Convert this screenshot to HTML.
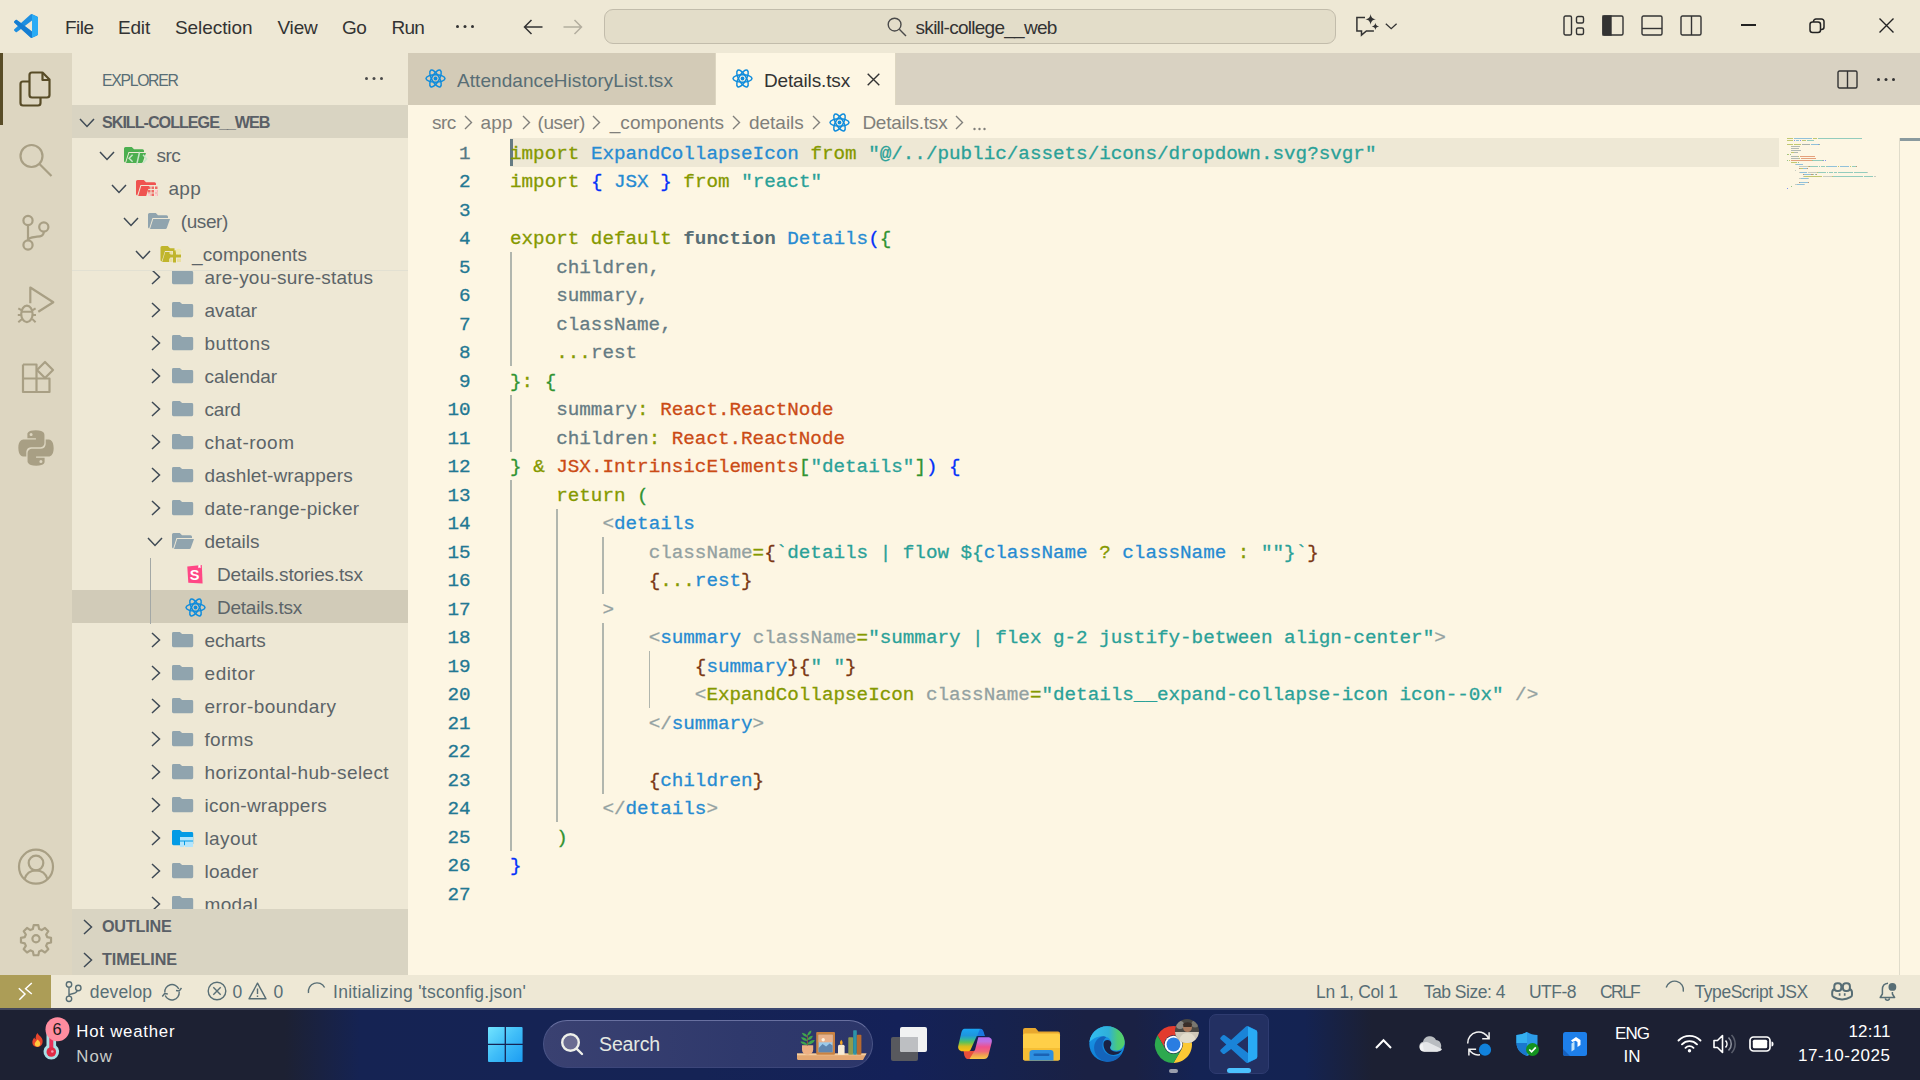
<!DOCTYPE html>
<html><head><meta charset="utf-8"><title>Details.tsx - skill-college__web - Visual Studio Code</title>
<style>
*{margin:0;padding:0;box-sizing:border-box}
html,body{width:1920px;height:1080px;overflow:hidden;background:#FDF6E3;font-family:"Liberation Sans",sans-serif;font-size:18.5px;color:#333}
.a{position:absolute}
.t{position:absolute;white-space:pre;line-height:1}
svg{position:absolute;overflow:visible}
#title{left:0;top:0;width:1920px;height:53px;background:#EEE8D5}
#act{left:0;top:53px;width:72px;height:922px;background:#DDD6C1}
#side{left:72px;top:53px;width:336px;height:922px;background:#EEE8D5;overflow:hidden}
#tabs{left:408px;top:53px;width:1512px;height:52px;background:#D9D2C2}
#bc{left:408px;top:105px;width:1512px;height:33px;background:#FDF6E3}
#ed{left:408px;top:138px;width:1512px;height:837px;background:#FDF6E3;overflow:hidden}
#status{left:0;top:975px;width:1920px;height:33px;background:#EEE8D5}
#task{left:0;top:1008px;width:1920px;height:72px;background:#1C202F}
</style></head><body>
<div id="title" class="a">
<!-- vscode logo -->
<svg style="left:14px;top:14px" width="24" height="24" viewBox="0 0 100 100"><path d="M70.9 99.3a6.2 6.2 0 0 0 5-.2l20.6-9.9A6.2 6.2 0 0 0 100 83.6V16.4a6.2 6.2 0 0 0-3.5-5.6L75.9.9a6.2 6.2 0 0 0-7.1 1.2L29.4 38 12.2 25a4.2 4.2 0 0 0-5.3.2L1.4 30.300a4.200 4.200 0 0 0 0 6.200L16.300 50 1.400 63.600a4.200 4.200 0 0 0 0 6.200l5.500 5a4.200 4.200 0 0 0 5.300.200l17.200-13 39.400 36a6.200 6.200 0 0 0 2.100 1.300zM75 27.300 45.100 50 75 72.700z" fill="#1E8FE0" fill-rule="evenodd"/><path d="M96.500 10.800 75.900.900a6.200 6.200 0 0 0-7.100 1.200L29.400 38 45.100 50 75 27.300V99.500l.900-.400 20.600-9.900A6.200 6.200 0 0 0 100 83.600V16.400a6.200 6.200 0 0 0-3.500-5.600z" fill="#23A9F2" opacity=".0"/><path d="M75 1.500V98.500c.3 0 .6-.2.900-.3l20.600-9.900A6.200 6.200 0 0 0 100 82.700V17.300a6.200 6.200 0 0 0-3.500-5.600L75.900 1.800c-.3-.1-.6-.2-.9-.3z" fill="#29ABF5"/><path d="M1.400 30.300l5.500-5a4.200 4.200 0 0 1 5.300-.2L75 72.700V99.300a6.200 6.200 0 0 1-6.200-1.400L1.400 36.500a4.200 4.200 0 0 1 0-6.200z" fill="#0C6FC6" opacity=".55"/></svg>
<span class="t" style="left:65px;top:18.200px;font-size:19px;letter-spacing:-0.529px">File</span>
<span class="t" style="left:118px;top:18.200px;font-size:19px;letter-spacing:-0.185px">Edit</span>
<span class="t" style="left:175px;top:18.200px;font-size:19px;letter-spacing:-0.074px">Selection</span>
<span class="t" style="left:277.5px;top:18.200px;font-size:19px;letter-spacing:-0.210px">View</span>
<span class="t" style="left:342px;top:18.200px;font-size:19px;letter-spacing:-0.423px">Go</span>
<span class="t" style="left:391.5px;top:18.200px;font-size:19px;letter-spacing:-0.785px">Run</span>
<svg style="left:455px;top:23.500px" width="22" height="5"><circle cx="2.500" cy="2.500" r="1.500" fill="#333"/><circle cx="10" cy="2.500" r="1.500" fill="#333"/><circle cx="17.500" cy="2.500" r="1.500" fill="#333"/></svg>
<!-- nav arrows -->
<svg style="left:523px;top:19px" width="20" height="16" viewBox="0 0 20 16" fill="none" stroke="#333" stroke-width="1.500"><path d="M19.500 8H1.500M8.500 1 1.500 8l7 7"/></svg>
<svg style="left:563px;top:19px" width="20" height="16" viewBox="0 0 20 16" fill="none" stroke="#B3AE9F" stroke-width="1.500"><path d="M.5 8h18M11.500 1l7 7-7 7"/></svg>
<!-- command center -->
<div class="a" style="left:604px;top:9px;width:732px;height:35px;background:#E3DDC9;border:1.500px solid #C2BCAB;border-radius:9px"></div>
<svg style="left:887px;top:17px" width="20" height="20" viewBox="0 0 20 20" fill="none" stroke="#4a4a4a" stroke-width="1.400"><circle cx="7.600" cy="7.600" r="6.400"/><path d="M12.300 12.300 19 19"/></svg>
<span class="t" style="left:915.600px;top:18.200px;font-size:19px;letter-spacing:-0.733px">skill-college__web</span>
<!-- chat icon -->
<svg style="left:1345px;top:5px" width="60" height="40" viewBox="0 0 60 40" fill="none" stroke="#333" stroke-width="1.500"><path d="M20 12.600h-8.100v13.300h4.600v4.200l4.900-4.200h7.500"/><path d="M25.600 8.900c.6 3.400 1.700 4.700 5.300 5.400-3.600.7-4.700 2-5.300 5.400-.6-3.400-1.700-4.700-5.300-5.400 3.600-.7 4.700-2 5.300-5.400z" fill="#333" stroke="none"/><path d="M30.400 17.800c.4 2.300 1.200 3.200 3.700 3.600-2.500.4-3.300 1.300-3.700 3.600-.4-2.300-1.200-3.200-3.700-3.600 2.500-.4 3.300-1.300 3.700-3.600z" fill="#333" stroke="none"/><path d="M40.800 18.700l5.400 5 5.400-5" stroke-width="1.300"/></svg>
<!-- layout icons -->
<svg style="left:1563px;top:15px" width="22" height="21" viewBox="0 0 22 21" fill="none" stroke="#333" stroke-width="1.400"><rect x="1" y="1" width="7.500" height="19" rx="1.500"/><rect x="13.500" y="1.500" width="7" height="6.500" rx="1.500"/><rect x="13.500" y="13" width="7" height="6.500" rx="1.500"/></svg>
<svg style="left:1602px;top:15px" width="22" height="21" viewBox="0 0 22 21" fill="none" stroke="#333" stroke-width="1.400"><rect x="1" y="1" width="20" height="19" rx="1.500"/><rect x="1" y="1" width="8" height="19" fill="#333"/></svg>
<svg style="left:1641px;top:15px" width="22" height="21" viewBox="0 0 22 21" fill="none" stroke="#333" stroke-width="1.400"><rect x="1" y="1" width="20" height="19" rx="1.500"/><path d="M1 13.500h20"/></svg>
<svg style="left:1680px;top:15px" width="22" height="21" viewBox="0 0 22 21" fill="none" stroke="#333" stroke-width="1.400"><rect x="1" y="1" width="20" height="19" rx="1.500"/><path d="M11.500 1v19"/></svg>
<!-- window controls -->
<div class="a" style="left:1741px;top:24px;width:15px;height:2px;background:#222"></div>
<svg style="left:1809px;top:18px" width="16" height="16" viewBox="0 0 16 16" fill="none" stroke="#222" stroke-width="1.500"><rect x="1" y="4" width="10.500" height="10.500" rx="2.500"/><path d="M4.500 4V3.500a2.500 2.500 0 0 1 2.500-2.500h5.500a2.500 2.500 0 0 1 2.500 2.500v5.500a2.500 2.500 0 0 1-2.500 2.500h-.5"/></svg>
<svg style="left:1879px;top:18px" width="15" height="15" viewBox="0 0 15 15" fill="none" stroke="#222" stroke-width="1.400"><path d="M.5.5l14 14M14.500.5l-14 14"/></svg>
</div>
<div id="act" class="a">
<div class="a" style="left:0;top:0;width:3px;height:72px;background:#584C27"></div>
<!-- explorer: abs x19-51, y71-107 => rel y 18-54 -->
<svg style="left:19px;top:18px" width="32" height="36" viewBox="0 0 32 36" fill="none" stroke="#584C27" stroke-width="2.200" stroke-linejoin="round"><path d="M10.500 10.500H4a2.500 2.500 0 0 0-2.500 2.500v19a2.500 2.500 0 0 0 2.500 2.500h15a2.500 2.500 0 0 0 2.500-2.500v-5.500"/><path d="M13 1.500h10.500l7 7v15.500a2.500 2.500 0 0 1-2.500 2.500h-15a2.500 2.500 0 0 1-2.500-2.500v-20a2.500 2.500 0 0 1 2.500-2.500z"/><path d="M23.500 2v7h7"/></svg>
<!-- search: circle center (31.500,156)=> rel y 103 -->
<svg style="left:0;top:72px" width="72" height="72" viewBox="0 0 72 72" fill="none" stroke="#A89F84" stroke-width="2.200"><circle cx="31.500" cy="31" r="11"/><path d="M39.500 39 51.500 51"/></svg>
<!-- scm: rel origin y=144 (abs 197) -->
<svg style="left:0;top:144px" width="72" height="72" viewBox="0 0 72 72" fill="none" stroke="#A89F84" stroke-width="2.200"><circle cx="28" cy="23.500" r="4.600"/><circle cx="28" cy="48" r="4.600"/><circle cx="43.800" cy="30" r="4.600"/><path d="M28 28.100v15.300M43.800 34.600c0 5-4 4.800-8 5.200s-7.800 1.500-7.800 3.600"/></svg>
<!-- debug: abs y 269 => rel 216 -->
<svg style="left:0;top:216px" width="72" height="72" viewBox="0 0 72 72" fill="none" stroke="#A89F84" stroke-width="2.200" stroke-linejoin="round"><path d="M30.300 34.300V18.500L53.300 33.200 38.300 42.700"/><ellipse cx="26.900" cy="44.900" rx="5.700" ry="8.200"/><path d="M21 42.700h12M18.300 39.300l3.900 2.300M35.600 39.300l-3.700 2.300M17.800 45.900h3.400M32.600 45.900h3.400M18.300 53.200l3.700-3.300M35.600 53.200l-3.400-3.300" stroke-width="2"/></svg>
<!-- extensions: abs y341 => rel 288 -->
<svg style="left:0;top:288px" width="72" height="72" viewBox="0 0 72 72" fill="none" stroke="#A89F84" stroke-width="2.200" stroke-linejoin="round"><path d="M23 23.500h13.500v27.500M23 23.500v27.500h26.500v-13.500h-26.500"/><path d="M45 21l8 8-8 8-8-8z"/></svg>
<!-- python: abs x18-54,y430-466 => rel y 377 -->
<svg style="left:18px;top:377px" width="36" height="36" viewBox="0 0 110 110"><path fill="#A89F84" d="M54.300 1C27 1 28.700 12.800 28.700 12.800l0 12.300h26.100v3.700H18.400S1 26.800 1 54.400s15.300 26.700 15.300 26.700h9.100V68.200s-.5-15.300 15-15.300h25.900s14.500.2 14.500-14V15.400S83 1 54.300 1zM40 9.200a4.700 4.700 0 1 1 0 9.400 4.700 4.700 0 0 1 0-9.400z"/><path fill="#A89F84" d="M55.700 109c27.300 0 25.600-11.800 25.600-11.800l0-12.300H55.200v-3.700h36.400S109 83.200 109 55.600 93.700 28.900 93.700 28.900h-9.100v12.900s.5 15.300-15 15.300H43.700s-14.500-.2-14.500 14v23.500S27 109 55.700 109zM70 100.800a4.700 4.700 0 1 1 0-9.400 4.700 4.700 0 0 1 0 9.400z"/></svg>
<!-- account: center abs (36,866.700) => rel y 813.700 -->
<svg style="left:0;top:778px" width="72" height="72" viewBox="0 0 72 72" fill="none" stroke="#A89F84" stroke-width="2.200"><circle cx="36" cy="35.700" r="17"/><circle cx="36" cy="32" r="7.300"/><path d="M24.500 48.300c1.500-5.500 6-9 11.500-9s10 3.500 11.500 9"/></svg>
<!-- gear: center abs (36,938.700) => rel y 885.700 -->
<svg style="left:0;top:850px" width="72" height="72" viewBox="-36 -35.700 72 72" fill="none" stroke="#A89F84" stroke-width="2.200" stroke-linejoin="round"><circle r="3.600"/><path transform="scale(.89)" stroke-width="2.450" d="M-2.600-15.200h5.200l.9 4.300 2.900 1.200 3.700-2.400 3.700 3.700-2.400 3.700 1.200 2.900 4.300.9v5.200l-4.300.9-1.200 2.900 2.400 3.700-3.700 3.700-3.700-2.400-2.900 1.200-.9 4.300h-5.200l-.9-4.300-2.900-1.200-3.700 2.400-3.700-3.700 2.400-3.700-1.200-2.900-4.300-.9v-5.200l4.300-.9 1.200-2.900-2.400-3.700 3.700-3.700 3.700 2.400 2.900-1.200z"/></svg>
</div>
<style>
#side .r{position:absolute;left:0;width:336px;height:33px}
#side .tx{position:absolute;white-space:pre;line-height:33px;height:33px;font-size:19px;color:#5C6468;top:0.5px}
#side .hd{position:absolute;left:0;width:336px;height:33px;background:#D9D4C2}
#side .hd span{position:absolute;left:30px;top:1px;line-height:33px;font-size:16.2px;font-weight:bold;color:#5A5F66;white-space:pre}
</style>
<div id="side" class="a">
<span class="t" style="left:30px;top:19.500px;font-size:15.800px;color:#586E75;letter-spacing:-1.317px">EXPLORER</span>
<svg style="left:292px;top:23px" width="20" height="5"><circle cx="2.500" cy="2.500" r="1.500" fill="#4a4a4a"/><circle cx="10" cy="2.500" r="1.500" fill="#4a4a4a"/><circle cx="17.500" cy="2.500" r="1.500" fill="#4a4a4a"/></svg>

<div class="a" style="left:0;top:537.0px;width:336px;height:33px;background:#D1CBB8"></div>
<div class="a" style="left:78.0px;top:504.5px;width:1px;height:66px;background:#A3A8A6"></div>
<svg style="left:78.5px;top:216.0px" width="10" height="16" viewBox="0 0 10 16" fill="none" stroke="#3F4A55" stroke-width="1.500"><path d="M1 1l7.500 7-7.500 7"/></svg>
<svg style="left:100.2px;top:216.3px" width="21.200" height="15.200" preserveAspectRatio="none" viewBox="0 0 21 16"><path d="M1.500 0h6.300l2.200 2.200h9.500a1.500 1.500 0 0 1 1.500 1.500v10.800a1.500 1.500 0 0 1-1.500 1.500h-18a1.500 1.500 0 0 1-1.500-1.500v-13a1.500 1.500 0 0 1 1.500-1.500z" fill="#90A4AE"/></svg>
<span class="tx" style="left:132.5px;top:208.0px;letter-spacing:0.214px">are-you-sure-status</span>
<svg style="left:78.5px;top:249.0px" width="10" height="16" viewBox="0 0 10 16" fill="none" stroke="#3F4A55" stroke-width="1.500"><path d="M1 1l7.500 7-7.500 7"/></svg>
<svg style="left:100.2px;top:249.3px" width="21.200" height="15.200" preserveAspectRatio="none" viewBox="0 0 21 16"><path d="M1.500 0h6.300l2.200 2.200h9.500a1.500 1.500 0 0 1 1.500 1.500v10.800a1.500 1.500 0 0 1-1.500 1.500h-18a1.500 1.500 0 0 1-1.500-1.500v-13a1.500 1.500 0 0 1 1.500-1.500z" fill="#90A4AE"/></svg>
<span class="tx" style="left:132.5px;top:241.0px;letter-spacing:-0.051px">avatar</span>
<svg style="left:78.5px;top:282.0px" width="10" height="16" viewBox="0 0 10 16" fill="none" stroke="#3F4A55" stroke-width="1.500"><path d="M1 1l7.500 7-7.500 7"/></svg>
<svg style="left:100.2px;top:282.3px" width="21.200" height="15.200" preserveAspectRatio="none" viewBox="0 0 21 16"><path d="M1.500 0h6.300l2.200 2.200h9.500a1.500 1.500 0 0 1 1.500 1.500v10.800a1.500 1.500 0 0 1-1.500 1.500h-18a1.500 1.500 0 0 1-1.500-1.500v-13a1.500 1.500 0 0 1 1.500-1.500z" fill="#90A4AE"/></svg>
<span class="tx" style="left:132.5px;top:274.0px;letter-spacing:0.525px">buttons</span>
<svg style="left:78.5px;top:315.0px" width="10" height="16" viewBox="0 0 10 16" fill="none" stroke="#3F4A55" stroke-width="1.500"><path d="M1 1l7.500 7-7.500 7"/></svg>
<svg style="left:100.2px;top:315.3px" width="21.200" height="15.200" preserveAspectRatio="none" viewBox="0 0 21 16"><path d="M1.500 0h6.300l2.200 2.200h9.500a1.500 1.500 0 0 1 1.500 1.500v10.800a1.500 1.500 0 0 1-1.500 1.500h-18a1.500 1.500 0 0 1-1.500-1.500v-13a1.500 1.500 0 0 1 1.500-1.500z" fill="#90A4AE"/></svg>
<span class="tx" style="left:132.5px;top:307.0px;letter-spacing:-0.048px">calendar</span>
<svg style="left:78.5px;top:348.0px" width="10" height="16" viewBox="0 0 10 16" fill="none" stroke="#3F4A55" stroke-width="1.500"><path d="M1 1l7.500 7-7.500 7"/></svg>
<svg style="left:100.2px;top:348.3px" width="21.200" height="15.200" preserveAspectRatio="none" viewBox="0 0 21 16"><path d="M1.500 0h6.300l2.200 2.200h9.500a1.500 1.500 0 0 1 1.500 1.500v10.800a1.500 1.500 0 0 1-1.500 1.500h-18a1.500 1.500 0 0 1-1.500-1.500v-13a1.500 1.500 0 0 1 1.500-1.500z" fill="#90A4AE"/></svg>
<span class="tx" style="left:132.5px;top:340.0px;letter-spacing:-0.190px">card</span>
<svg style="left:78.5px;top:381.0px" width="10" height="16" viewBox="0 0 10 16" fill="none" stroke="#3F4A55" stroke-width="1.500"><path d="M1 1l7.500 7-7.500 7"/></svg>
<svg style="left:100.2px;top:381.3px" width="21.200" height="15.200" preserveAspectRatio="none" viewBox="0 0 21 16"><path d="M1.500 0h6.300l2.200 2.200h9.500a1.500 1.500 0 0 1 1.500 1.500v10.800a1.500 1.500 0 0 1-1.500 1.500h-18a1.500 1.500 0 0 1-1.500-1.500v-13a1.500 1.500 0 0 1 1.500-1.500z" fill="#90A4AE"/></svg>
<span class="tx" style="left:132.5px;top:373.0px;letter-spacing:0.497px">chat-room</span>
<svg style="left:78.5px;top:414.0px" width="10" height="16" viewBox="0 0 10 16" fill="none" stroke="#3F4A55" stroke-width="1.500"><path d="M1 1l7.500 7-7.500 7"/></svg>
<svg style="left:100.2px;top:414.3px" width="21.200" height="15.200" preserveAspectRatio="none" viewBox="0 0 21 16"><path d="M1.500 0h6.300l2.200 2.200h9.500a1.500 1.500 0 0 1 1.500 1.500v10.800a1.500 1.500 0 0 1-1.500 1.500h-18a1.500 1.500 0 0 1-1.500-1.500v-13a1.500 1.500 0 0 1 1.500-1.500z" fill="#90A4AE"/></svg>
<span class="tx" style="left:132.5px;top:406.0px;letter-spacing:0.173px">dashlet-wrappers</span>
<svg style="left:78.5px;top:447.0px" width="10" height="16" viewBox="0 0 10 16" fill="none" stroke="#3F4A55" stroke-width="1.500"><path d="M1 1l7.500 7-7.500 7"/></svg>
<svg style="left:100.2px;top:447.3px" width="21.200" height="15.200" preserveAspectRatio="none" viewBox="0 0 21 16"><path d="M1.500 0h6.300l2.200 2.200h9.500a1.500 1.500 0 0 1 1.500 1.500v10.800a1.500 1.500 0 0 1-1.500 1.500h-18a1.500 1.500 0 0 1-1.500-1.500v-13a1.500 1.500 0 0 1 1.500-1.500z" fill="#90A4AE"/></svg>
<span class="tx" style="left:132.5px;top:439.0px;letter-spacing:0.358px">date-range-picker</span>
<svg style="left:74.7px;top:483.5px" width="16" height="10" viewBox="0 0 16 10" fill="none" stroke="#3F4A55" stroke-width="1.500"><path d="M1 1l7 7.500 7-7.500"/></svg>
<svg style="left:100.0px;top:480.0px" width="22" height="16" viewBox="0 0 22 16"><path d="M1.500 0h6.300l2.200 2.200h8.500a1.500 1.500 0 0 1 1.500 1.500v1.300h-15.500l-3.300 10.500a1.500 1.500 0 0 1-1.200-1.500v-12.500a1.500 1.500 0 0 1 1.500-1.500z" fill="#90A4AE"/><path d="M5.200 6h16.800l-3.200 9a1.500 1.500 0 0 1-1.400 1h-15.400z" fill="#90A4AE"/></svg>
<span class="tx" style="left:132.5px;top:472.0px;letter-spacing:0.011px">details</span>
<svg style="left:115.0px;top:511.5px" width="16" height="19" viewBox="0 0 16 19"><path d="M.3 1.500 14.800 0l.8 18.500-14.300-.700z" fill="#FF4785"/><path d="M11.300.3l.1 3 1.100-.9 1.100.8-.1-3.100z" fill="#fff"/><text x="7.700" y="15" font-family="Liberation Sans" font-weight="bold" font-size="14.500" fill="#fff" text-anchor="middle">S</text></svg>
<span class="tx" style="left:145.0px;top:505.0px;letter-spacing:-0.162px">Details.stories.tsx</span>
<svg style="left:112.5px;top:544.5px" width="21" height="19" viewBox="0 0 21 19"><g fill="none" stroke="#0F8CDC" stroke-width="1.500"><ellipse cx="10.500" cy="9.500" rx="9.500" ry="3.700"/><ellipse cx="10.500" cy="9.500" rx="9.500" ry="3.700" transform="rotate(60 10.500 9.500)"/><ellipse cx="10.500" cy="9.500" rx="9.500" ry="3.700" transform="rotate(120 10.500 9.500)"/><circle cx="10.500" cy="9.500" r="1.900" fill="#0F8CDC" stroke="none"/></g></svg>
<span class="tx" style="left:145.0px;top:538.0px;letter-spacing:-0.239px">Details.tsx</span>
<svg style="left:78.5px;top:579.0px" width="10" height="16" viewBox="0 0 10 16" fill="none" stroke="#3F4A55" stroke-width="1.500"><path d="M1 1l7.500 7-7.500 7"/></svg>
<svg style="left:100.2px;top:579.3px" width="21.200" height="15.200" preserveAspectRatio="none" viewBox="0 0 21 16"><path d="M1.500 0h6.300l2.200 2.200h9.500a1.500 1.500 0 0 1 1.500 1.500v10.800a1.500 1.500 0 0 1-1.500 1.500h-18a1.500 1.500 0 0 1-1.500-1.500v-13a1.500 1.500 0 0 1 1.500-1.500z" fill="#90A4AE"/></svg>
<span class="tx" style="left:132.5px;top:571.0px;letter-spacing:-0.187px">echarts</span>
<svg style="left:78.5px;top:612.0px" width="10" height="16" viewBox="0 0 10 16" fill="none" stroke="#3F4A55" stroke-width="1.500"><path d="M1 1l7.500 7-7.500 7"/></svg>
<svg style="left:100.2px;top:612.3px" width="21.200" height="15.200" preserveAspectRatio="none" viewBox="0 0 21 16"><path d="M1.500 0h6.300l2.200 2.200h9.500a1.500 1.500 0 0 1 1.500 1.500v10.800a1.500 1.500 0 0 1-1.500 1.500h-18a1.500 1.500 0 0 1-1.500-1.500v-13a1.500 1.500 0 0 1 1.500-1.500z" fill="#90A4AE"/></svg>
<span class="tx" style="left:132.5px;top:604.0px;letter-spacing:0.579px">editor</span>
<svg style="left:78.5px;top:645.0px" width="10" height="16" viewBox="0 0 10 16" fill="none" stroke="#3F4A55" stroke-width="1.500"><path d="M1 1l7.500 7-7.500 7"/></svg>
<svg style="left:100.2px;top:645.3px" width="21.200" height="15.200" preserveAspectRatio="none" viewBox="0 0 21 16"><path d="M1.500 0h6.300l2.200 2.200h9.500a1.500 1.500 0 0 1 1.500 1.500v10.800a1.500 1.500 0 0 1-1.500 1.500h-18a1.500 1.500 0 0 1-1.500-1.500v-13a1.500 1.500 0 0 1 1.500-1.500z" fill="#90A4AE"/></svg>
<span class="tx" style="left:132.5px;top:637.0px;letter-spacing:0.452px">error-boundary</span>
<svg style="left:78.5px;top:678.0px" width="10" height="16" viewBox="0 0 10 16" fill="none" stroke="#3F4A55" stroke-width="1.500"><path d="M1 1l7.500 7-7.500 7"/></svg>
<svg style="left:100.2px;top:678.3px" width="21.200" height="15.200" preserveAspectRatio="none" viewBox="0 0 21 16"><path d="M1.500 0h6.300l2.200 2.200h9.500a1.500 1.500 0 0 1 1.500 1.500v10.800a1.500 1.500 0 0 1-1.500 1.500h-18a1.500 1.500 0 0 1-1.500-1.500v-13a1.500 1.500 0 0 1 1.500-1.500z" fill="#90A4AE"/></svg>
<span class="tx" style="left:132.5px;top:670.0px;letter-spacing:0.300px">forms</span>
<svg style="left:78.5px;top:711.0px" width="10" height="16" viewBox="0 0 10 16" fill="none" stroke="#3F4A55" stroke-width="1.500"><path d="M1 1l7.500 7-7.500 7"/></svg>
<svg style="left:100.2px;top:711.3px" width="21.200" height="15.200" preserveAspectRatio="none" viewBox="0 0 21 16"><path d="M1.500 0h6.300l2.200 2.200h9.500a1.500 1.500 0 0 1 1.500 1.500v10.800a1.500 1.500 0 0 1-1.500 1.500h-18a1.500 1.500 0 0 1-1.500-1.500v-13a1.500 1.500 0 0 1 1.500-1.500z" fill="#90A4AE"/></svg>
<span class="tx" style="left:132.5px;top:703.0px;letter-spacing:0.387px">horizontal-hub-select</span>
<svg style="left:78.5px;top:744.0px" width="10" height="16" viewBox="0 0 10 16" fill="none" stroke="#3F4A55" stroke-width="1.500"><path d="M1 1l7.500 7-7.500 7"/></svg>
<svg style="left:100.2px;top:744.3px" width="21.200" height="15.200" preserveAspectRatio="none" viewBox="0 0 21 16"><path d="M1.500 0h6.300l2.200 2.200h9.500a1.500 1.500 0 0 1 1.500 1.500v10.800a1.500 1.500 0 0 1-1.500 1.500h-18a1.500 1.500 0 0 1-1.500-1.500v-13a1.500 1.500 0 0 1 1.500-1.500z" fill="#90A4AE"/></svg>
<span class="tx" style="left:132.5px;top:736.0px;letter-spacing:0.244px">icon-wrappers</span>
<svg style="left:78.5px;top:777.0px" width="10" height="16" viewBox="0 0 10 16" fill="none" stroke="#3F4A55" stroke-width="1.500"><path d="M1 1l7.500 7-7.500 7"/></svg>
<svg style="left:100.2px;top:777.3px" width="21.200" height="15.200" preserveAspectRatio="none" viewBox="0 0 21 16"><path d="M1.500 0h6.300l2.200 2.200h9.500a1.500 1.500 0 0 1 1.500 1.500v10.800a1.500 1.500 0 0 1-1.500 1.500h-18a1.500 1.500 0 0 1-1.500-1.500v-13a1.500 1.500 0 0 1 1.500-1.500z" fill="#039BE5"/></svg>
<svg style="left:108.0px;top:784.0px" width="14" height="10" viewBox="0 0 14 10"><path d="M0 0h13v3.500h-13zM0 4.500h4v5.500h-4zM5 4.500h8v5.500h-8z" fill="#B3E5FC"/></svg>
<span class="tx" style="left:132.5px;top:769.0px;letter-spacing:0.383px">layout</span>
<svg style="left:78.5px;top:810.0px" width="10" height="16" viewBox="0 0 10 16" fill="none" stroke="#3F4A55" stroke-width="1.500"><path d="M1 1l7.500 7-7.500 7"/></svg>
<svg style="left:100.2px;top:810.3px" width="21.200" height="15.200" preserveAspectRatio="none" viewBox="0 0 21 16"><path d="M1.500 0h6.300l2.200 2.200h9.500a1.500 1.500 0 0 1 1.500 1.500v10.800a1.500 1.500 0 0 1-1.500 1.500h-18a1.500 1.500 0 0 1-1.500-1.500v-13a1.500 1.500 0 0 1 1.500-1.500z" fill="#90A4AE"/></svg>
<span class="tx" style="left:132.5px;top:802.0px;letter-spacing:0.197px">loader</span>
<svg style="left:78.5px;top:843.0px" width="10" height="16" viewBox="0 0 10 16" fill="none" stroke="#3F4A55" stroke-width="1.500"><path d="M1 1l7.500 7-7.500 7"/></svg>
<svg style="left:100.2px;top:843.3px" width="21.200" height="15.200" preserveAspectRatio="none" viewBox="0 0 21 16"><path d="M1.500 0h6.300l2.200 2.200h9.500a1.500 1.500 0 0 1 1.500 1.500v10.800a1.500 1.500 0 0 1-1.500 1.500h-18a1.500 1.500 0 0 1-1.500-1.500v-13a1.500 1.500 0 0 1 1.500-1.500z" fill="#90A4AE"/></svg>
<span class="tx" style="left:132.5px;top:835.0px;letter-spacing:0.350px">modal</span>
<div class="a" style="left:0;top:85px;width:336px;height:132.500px;background:#EEE8D5;border-bottom:1px solid #E2E0D2"></div>
<div class="hd" style="top:52px"><span style="letter-spacing:-1.037px">SKILL-COLLEGE__WEB</span></div>
<svg style="left:7.2px;top:64.5px" width="16" height="10" viewBox="0 0 16 10" fill="none" stroke="#3F4A55" stroke-width="1.500"><path d="M1 1l7 7.500 7-7.500"/></svg>
<svg style="left:26.7px;top:97.5px" width="16" height="10" viewBox="0 0 16 10" fill="none" stroke="#3F4A55" stroke-width="1.500"><path d="M1 1l7 7.500 7-7.500"/></svg>
<span class="tx" style="left:84.5px;top:86.0px;letter-spacing:-0.509px">src</span>
<svg style="left:38.7px;top:130.5px" width="16" height="10" viewBox="0 0 16 10" fill="none" stroke="#3F4A55" stroke-width="1.500"><path d="M1 1l7 7.500 7-7.500"/></svg>
<span class="tx" style="left:96.5px;top:119.0px;letter-spacing:0.266px">app</span>
<svg style="left:50.7px;top:163.5px" width="16" height="10" viewBox="0 0 16 10" fill="none" stroke="#3F4A55" stroke-width="1.500"><path d="M1 1l7 7.500 7-7.500"/></svg>
<svg style="left:76.0px;top:160.0px" width="22" height="16" viewBox="0 0 22 16"><path d="M1.500 0h6.300l2.200 2.200h8.500a1.500 1.500 0 0 1 1.500 1.500v1.300h-15.500l-3.300 10.500a1.500 1.500 0 0 1-1.200-1.500v-12.500a1.500 1.500 0 0 1 1.500-1.500z" fill="#90A4AE"/><path d="M5.200 6h16.800l-3.200 9a1.500 1.500 0 0 1-1.400 1h-15.400z" fill="#90A4AE"/></svg>
<span class="tx" style="left:108.8px;top:152.0px;letter-spacing:-0.436px">(user)</span>
<svg style="left:62.7px;top:196.5px" width="16" height="10" viewBox="0 0 16 10" fill="none" stroke="#3F4A55" stroke-width="1.500"><path d="M1 1l7 7.500 7-7.500"/></svg>
<span class="tx" style="left:120.0px;top:185.0px;letter-spacing:0.084px">_components</span>
<svg style="left:52.0px;top:94.0px" width="22" height="17" viewBox="0 0 22 17"><path d="M1.500 0h6.300l2.200 2.200h8.500a1.500 1.500 0 0 1 1.500 1.500v1.300h-15.500l-3.300 10.500a1.500 1.500 0 0 1-1.200-1.500v-12.500a1.500 1.500 0 0 1 1.500-1.500z" fill="#4CAF50"/><path d="M5.200 6h16.800l-3.200 9a1.500 1.500 0 0 1-1.400 1h-15.400z" fill="#4CAF50"/><path d="M8.600 7.800 5.100 11.300l3.500 3.500M19.100 7.800l3.500 4.100-3.500 4.100M15.600 4.900l-2.900 12.800" fill="none" stroke="#C8E6C9" stroke-width="1.500"/></svg>
<svg style="left:64.0px;top:127.0px" width="22" height="17" viewBox="0 0 22 17"><path d="M1.500 0h6.300l2.200 2.200h8.500a1.500 1.500 0 0 1 1.500 1.500v1.300h-15.500l-3.300 10.500a1.500 1.500 0 0 1-1.200-1.500v-12.500a1.500 1.500 0 0 1 1.500-1.500z" fill="#EF5350"/><path d="M5.200 6h8l-3 10h-8z" fill="#EF5350"/><path d="M12 6.500h2.500v2.500h-2.500zM15.500 6.500h2.500v2.500h-2.500zM19 6.500h2.500v2.500h-2.500zM12 10h2.500v2.500h-2.500zM15.500 10h2.500v2.500h-2.500zM19 10h2.500v2.500h-2.500zM12 13.500h2.500v2.500h-2.500zM15.500 13.500h2.500v2.500h-2.500zM19 13.500h2.500v2.500h-2.500z" fill="#EF5350" opacity=".85"/><path d="M19 10h2.500v2.500h-2.500zM19 13.500h2.500v2.500h-2.500zM12 13.500h2.500v2.500h-2.500z" fill="#FFCDD2"/></svg>
<svg style="left:88.0px;top:193.0px" width="22" height="17" viewBox="0 0 22 17"><path d="M1.500 0h6.300l2.200 2.200h4.500v2.800h-9.500l-3.300 10.500a1.500 1.500 0 0 1-1.200-1.500v-12.500a1.500 1.500 0 0 1 1.500-1.500z" fill="#C0B52B"/><path d="M5.200 6h5.500l-1 10h-7.500z" fill="#C0B52B"/><path d="M8 8.500h5v-4h3v4h5v3h-5v5h-3v-5h-5z" fill="#C0B52B"/><circle cx="18.500" cy="5.500" r="2.800" fill="#EFE9B0"/><path d="M9 12.500h3.500v3.500h-3.500zM17 12.500h4v3.500h-4zM9.500 5.500h3v2.500h-3z" fill="#EADFA0"/></svg>
<div class="hd" style="top:856px"><span style="letter-spacing:-0.220px">OUTLINE</span></div>
<div class="hd" style="top:889px"><span style="letter-spacing:-0.067px">TIMELINE</span></div>
<svg style="left:11.0px;top:865.5px" width="10" height="16" viewBox="0 0 10 16" fill="none" stroke="#3F4A55" stroke-width="1.500"><path d="M1 1l7.500 7-7.500 7"/></svg>
<svg style="left:11.0px;top:898.5px" width="10" height="16" viewBox="0 0 10 16" fill="none" stroke="#3F4A55" stroke-width="1.500"><path d="M1 1l7.500 7-7.500 7"/></svg>
</div>
<div id="tabs" class="a"></div><div id="bc" class="a"></div>
<div class="a" style="left:408px;top:53px;width:308px;height:52px;background:#D3CBB7;border-right:1px solid #DDD6C1"></div>
<div class="a" style="left:716px;top:53px;width:180px;height:52px;background:#FDF6E3;border-right:1px solid #DDD6C1"></div>
<svg style="left:424.5px;top:69.3px" width="21" height="19" viewBox="0 0 21 19"><g fill="none" stroke="#0F8CDC" stroke-width="1.500"><ellipse cx="10.500" cy="9.500" rx="9.500" ry="3.700"/><ellipse cx="10.500" cy="9.500" rx="9.500" ry="3.700" transform="rotate(60 10.500 9.500)"/><ellipse cx="10.500" cy="9.500" rx="9.500" ry="3.700" transform="rotate(120 10.500 9.500)"/><circle cx="10.500" cy="9.500" r="1.900" fill="#0F8CDC" stroke="none"/></g></svg>
<span class="t" style="left:457.0px;top:71.0px;font-size:19px;color:#586E75;font-weight:normal;letter-spacing:0.065px">AttendanceHistoryList.tsx</span>
<svg style="left:732.2px;top:69.3px" width="21" height="19" viewBox="0 0 21 19"><g fill="none" stroke="#0F8CDC" stroke-width="1.500"><ellipse cx="10.500" cy="9.500" rx="9.500" ry="3.700"/><ellipse cx="10.500" cy="9.500" rx="9.500" ry="3.700" transform="rotate(60 10.500 9.500)"/><ellipse cx="10.500" cy="9.500" rx="9.500" ry="3.700" transform="rotate(120 10.500 9.500)"/><circle cx="10.500" cy="9.500" r="1.900" fill="#0F8CDC" stroke="none"/></g></svg>
<span class="t" style="left:764.0px;top:71.0px;font-size:19px;color:#333;font-weight:normal;letter-spacing:-0.149px">Details.tsx</span>
<svg style="left:867px;top:73px" width="13" height="13" viewBox="0 0 13 13" fill="none" stroke="#333" stroke-width="1.400"><path d="M.7.7l11.600 11.600M12.300.7.7 12.300"/></svg>
<svg style="left:1837px;top:70px" width="21" height="19" viewBox="0 0 21 19" fill="none" stroke="#333" stroke-width="1.400"><rect x="1" y="1" width="19" height="17" rx="1.500"/><path d="M10.500 1v17"/></svg>
<svg style="left:1876px;top:77px" width="20" height="5"><circle cx="2.500" cy="2.500" r="1.500" fill="#333"/><circle cx="10" cy="2.500" r="1.500" fill="#333"/><circle cx="17.500" cy="2.500" r="1.500" fill="#333"/></svg>
<span class="t" style="left:432.0px;top:113.0px;font-size:19px;color:#807F7B;font-weight:normal;letter-spacing:-0.576px">src</span>
<svg style="left:463.8px;top:114.5px" width="9" height="15" viewBox="0 0 9 15" fill="none" stroke="#807F7B" stroke-width="1.400"><path d="M1 1l6.500 6.500-6.500 6.500"/></svg>
<span class="t" style="left:480.4px;top:113.0px;font-size:19px;color:#807F7B;font-weight:normal;letter-spacing:0.200px">app</span>
<svg style="left:521.8px;top:114.5px" width="9" height="15" viewBox="0 0 9 15" fill="none" stroke="#807F7B" stroke-width="1.400"><path d="M1 1l6.500 6.500-6.500 6.500"/></svg>
<span class="t" style="left:537.4px;top:113.0px;font-size:19px;color:#807F7B;font-weight:normal;letter-spacing:-0.336px">(user)</span>
<svg style="left:592.3px;top:114.5px" width="9" height="15" viewBox="0 0 9 15" fill="none" stroke="#807F7B" stroke-width="1.400"><path d="M1 1l6.500 6.500-6.500 6.500"/></svg>
<span class="t" style="left:609.8px;top:113.0px;font-size:19px;color:#807F7B;font-weight:normal;letter-spacing:0.011px">_components</span>
<svg style="left:731.8px;top:114.5px" width="9" height="15" viewBox="0 0 9 15" fill="none" stroke="#807F7B" stroke-width="1.400"><path d="M1 1l6.500 6.500-6.500 6.500"/></svg>
<span class="t" style="left:749.0px;top:113.0px;font-size:19px;color:#807F7B;font-weight:normal;letter-spacing:-0.017px">details</span>
<svg style="left:811.8px;top:114.5px" width="9" height="15" viewBox="0 0 9 15" fill="none" stroke="#807F7B" stroke-width="1.400"><path d="M1 1l6.500 6.500-6.500 6.500"/></svg>
<svg style="left:829.3px;top:112.6px" width="21" height="19" viewBox="0 0 21 19"><g fill="none" stroke="#0F8CDC" stroke-width="1.500"><ellipse cx="10.500" cy="9.500" rx="9.500" ry="3.700"/><ellipse cx="10.500" cy="9.500" rx="9.500" ry="3.700" transform="rotate(60 10.500 9.500)"/><ellipse cx="10.500" cy="9.500" rx="9.500" ry="3.700" transform="rotate(120 10.500 9.500)"/><circle cx="10.500" cy="9.500" r="1.900" fill="#0F8CDC" stroke="none"/></g></svg>
<span class="t" style="left:862.4px;top:113.0px;font-size:19px;color:#807F7B;font-weight:normal;letter-spacing:-0.239px">Details.tsx</span>
<svg style="left:954.8px;top:114.5px" width="9" height="15" viewBox="0 0 9 15" fill="none" stroke="#807F7B" stroke-width="1.400"><path d="M1 1l6.500 6.500-6.500 6.500"/></svg>
<svg style="left:973px;top:127px" width="14" height="4"><circle cx="1.500" cy="2" r="1.200" fill="#807F7B"/><circle cx="6.500" cy="2" r="1.200" fill="#807F7B"/><circle cx="11.500" cy="2" r="1.200" fill="#807F7B"/></svg>
<style>
#ed .ln{position:absolute;left:0;width:62.5px;-webkit-text-stroke:0.3px;text-align:right;font-family:"Liberation Mono",monospace;font-size:19.25px;color:#237893;height:28.5px;line-height:28.5px}
#ed .cl{position:absolute;left:102px;white-space:pre;-webkit-text-stroke:0.3px;font-family:"Liberation Mono",monospace;font-size:19.25px;color:#657B83;height:28.5px;line-height:28.5px}
.k{color:#859900}.v{color:#268BD2}.s{color:#2AA198}.f{color:#657B83}.ty{color:#CB4B16}.p{color:#93A1A1}
.b1{color:#0431FA}.b2{color:#319331}.b3{color:#7B3814}.fn{color:#586E75;font-weight:bold;-webkit-text-stroke:0}
.ig{position:absolute;width:1.5px;background:#B1B6AE}
</style>
<div id="ed" class="a">
<div class="a" style="left:102px;top:0;width:1269px;height:28.5px;background:#EEE8D5"></div>
<div class="a" style="left:102px;top:0.5px;width:3px;height:27.5px;background:#657B83"></div>

<div class="ig" style="left:102.0px;top:114.0px;height:114.0px"></div>
<div class="ig" style="left:102.0px;top:256.5px;height:57.0px"></div>
<div class="ig" style="left:102.0px;top:342.0px;height:370.5px"></div>
<div class="ig" style="left:148.2px;top:370.5px;height:313.5px"></div>
<div class="ig" style="left:194.4px;top:399.0px;height:57.0px"></div>
<div class="ig" style="left:194.4px;top:484.5px;height:171.0px"></div>
<div class="ig" style="left:240.6px;top:513.0px;height:57.0px"></div>
<div class="ln" style="top:1.6px;color:#567983">1</div>
<div class="cl" style="top:1.6px"><span class="k">import</span> <span class="v">ExpandCollapseIcon</span> <span class="k">from</span> <span class="s">"@/../public/assets/icons/dropdown.svg?svgr"</span></div>
<div class="ln" style="top:30.1px">2</div>
<div class="cl" style="top:30.1px"><span class="k">import</span> <span class="b1">{</span> <span class="v">JSX</span> <span class="b1">}</span> <span class="k">from</span> <span class="s">"react"</span></div>
<div class="ln" style="top:58.6px">3</div>
<div class="ln" style="top:87.1px">4</div>
<div class="cl" style="top:87.1px"><span class="k">export default</span> <span class="fn">function</span> <span class="v">Details</span><span class="b1">(</span><span class="b2">{</span></div>
<div class="ln" style="top:115.6px">5</div>
<div class="cl" style="top:115.6px">    children,</div>
<div class="ln" style="top:144.1px">6</div>
<div class="cl" style="top:144.1px">    summary,</div>
<div class="ln" style="top:172.6px">7</div>
<div class="cl" style="top:172.6px">    className,</div>
<div class="ln" style="top:201.1px">8</div>
<div class="cl" style="top:201.1px">    <span class="k">...</span>rest</div>
<div class="ln" style="top:229.6px">9</div>
<div class="cl" style="top:229.6px"><span class="b2">}</span><span class="k">:</span> <span class="b2">{</span></div>
<div class="ln" style="top:258.1px">10</div>
<div class="cl" style="top:258.1px">    summary<span class="k">:</span> <span class="ty">React.ReactNode</span></div>
<div class="ln" style="top:286.6px">11</div>
<div class="cl" style="top:286.6px">    children<span class="k">:</span> <span class="ty">React.ReactNode</span></div>
<div class="ln" style="top:315.1px">12</div>
<div class="cl" style="top:315.1px"><span class="b2">}</span> <span class="k">&amp;</span> <span class="ty">JSX.IntrinsicElements</span><span class="b2">[</span><span class="s">"details"</span><span class="b2">]</span><span class="b1">)</span> <span class="b1">{</span></div>
<div class="ln" style="top:343.6px">13</div>
<div class="cl" style="top:343.6px">    <span class="k">return</span> <span class="b2">(</span></div>
<div class="ln" style="top:372.1px">14</div>
<div class="cl" style="top:372.1px">        <span class="p">&lt;</span><span class="v">details</span></div>
<div class="ln" style="top:400.6px">15</div>
<div class="cl" style="top:400.6px">            <span class="p">className</span><span class="k">=</span><span class="b3">{</span><span class="s">`details | flow ${</span><span class="v">className</span> <span class="k">?</span> <span class="v">className</span> <span class="k">:</span> <span class="s">""}`</span><span class="b3">}</span></div>
<div class="ln" style="top:429.1px">16</div>
<div class="cl" style="top:429.1px">            <span class="b3">{</span><span class="k">...</span><span class="v">rest</span><span class="b3">}</span></div>
<div class="ln" style="top:457.6px">17</div>
<div class="cl" style="top:457.6px">        <span class="p">&gt;</span></div>
<div class="ln" style="top:486.1px">18</div>
<div class="cl" style="top:486.1px">            <span class="p">&lt;</span><span class="v">summary</span> <span class="p">className</span><span class="k">=</span><span class="s">"summary | flex g-2 justify-between align-center"</span><span class="p">&gt;</span></div>
<div class="ln" style="top:514.6px">19</div>
<div class="cl" style="top:514.6px">                <span class="b3">{</span><span class="v">summary</span><span class="b3">}</span><span class="b3">{</span><span class="s">" "</span><span class="b3">}</span></div>
<div class="ln" style="top:543.1px">20</div>
<div class="cl" style="top:543.1px">                <span class="p">&lt;</span><span class="k">ExpandCollapseIcon</span> <span class="p">className</span><span class="k">=</span><span class="s">"details__expand-collapse-icon icon--0x"</span> <span class="p">/&gt;</span></div>
<div class="ln" style="top:571.6px">21</div>
<div class="cl" style="top:571.6px">            <span class="p">&lt;/</span><span class="v">summary</span><span class="p">&gt;</span></div>
<div class="ln" style="top:600.1px">22</div>
<div class="ln" style="top:628.6px">23</div>
<div class="cl" style="top:628.6px">            <span class="b3">{</span><span class="v">children</span><span class="b3">}</span></div>
<div class="ln" style="top:657.1px">24</div>
<div class="cl" style="top:657.1px">        <span class="p">&lt;/</span><span class="v">details</span><span class="p">&gt;</span></div>
<div class="ln" style="top:685.6px">25</div>
<div class="cl" style="top:685.6px">    <span class="b2">)</span></div>
<div class="ln" style="top:714.1px">26</div>
<div class="cl" style="top:714.1px"><span class="b1">}</span></div>
<div class="ln" style="top:742.6px">27</div>
<svg style="left:1379px;top:0" width="92" height="60" viewBox="0 0 92 60" shape-rendering="crispEdges"><rect x="0" y="0.3" width="6" height="1.100" fill="#859900" opacity=".5"/><rect x="7" y="0.3" width="18" height="1.100" fill="#268BD2" opacity=".5"/><rect x="26" y="0.3" width="4" height="1.100" fill="#859900" opacity=".5"/><rect x="31" y="0.3" width="44" height="1.100" fill="#2AA198" opacity=".5"/><rect x="0" y="2.3" width="6" height="1.100" fill="#859900" opacity=".5"/><rect x="7" y="2.3" width="1" height="1.100" fill="#0431FA" opacity=".5"/><rect x="9" y="2.3" width="3" height="1.100" fill="#268BD2" opacity=".5"/><rect x="13" y="2.3" width="1" height="1.100" fill="#0431FA" opacity=".5"/><rect x="15" y="2.3" width="4" height="1.100" fill="#859900" opacity=".5"/><rect x="20" y="2.3" width="7" height="1.100" fill="#2AA198" opacity=".5"/><rect x="0" y="6.3" width="6" height="1.100" fill="#859900" opacity=".5"/><rect x="7" y="6.3" width="7" height="1.100" fill="#859900" opacity=".5"/><rect x="15" y="6.3" width="8" height="1.100" fill="#586E75" opacity=".5"/><rect x="24" y="6.3" width="7" height="1.100" fill="#268BD2" opacity=".5"/><rect x="31" y="6.3" width="1" height="1.100" fill="#0431FA" opacity=".5"/><rect x="32" y="6.3" width="1" height="1.100" fill="#319331" opacity=".5"/><rect x="4" y="8.3" width="9" height="1.100" fill="#657B83" opacity=".5"/><rect x="4" y="10.3" width="8" height="1.100" fill="#657B83" opacity=".5"/><rect x="4" y="12.3" width="10" height="1.100" fill="#657B83" opacity=".5"/><rect x="4" y="14.3" width="3" height="1.100" fill="#859900" opacity=".5"/><rect x="7" y="14.3" width="4" height="1.100" fill="#657B83" opacity=".5"/><rect x="0" y="16.3" width="1" height="1.100" fill="#319331" opacity=".5"/><rect x="1" y="16.3" width="1" height="1.100" fill="#859900" opacity=".5"/><rect x="3" y="16.3" width="1" height="1.100" fill="#319331" opacity=".5"/><rect x="4" y="18.3" width="7" height="1.100" fill="#657B83" opacity=".5"/><rect x="11" y="18.3" width="1" height="1.100" fill="#859900" opacity=".5"/><rect x="13" y="18.3" width="15" height="1.100" fill="#CB4B16" opacity=".5"/><rect x="4" y="20.3" width="8" height="1.100" fill="#657B83" opacity=".5"/><rect x="12" y="20.3" width="1" height="1.100" fill="#859900" opacity=".5"/><rect x="14" y="20.3" width="15" height="1.100" fill="#CB4B16" opacity=".5"/><rect x="0" y="22.3" width="1" height="1.100" fill="#319331" opacity=".5"/><rect x="2" y="22.3" width="1" height="1.100" fill="#859900" opacity=".5"/><rect x="4" y="22.3" width="21" height="1.100" fill="#CB4B16" opacity=".5"/><rect x="25" y="22.3" width="1" height="1.100" fill="#319331" opacity=".5"/><rect x="26" y="22.3" width="9" height="1.100" fill="#2AA198" opacity=".5"/><rect x="35" y="22.3" width="1" height="1.100" fill="#319331" opacity=".5"/><rect x="36" y="22.3" width="1" height="1.100" fill="#0431FA" opacity=".5"/><rect x="38" y="22.3" width="1" height="1.100" fill="#0431FA" opacity=".5"/><rect x="4" y="24.3" width="6" height="1.100" fill="#859900" opacity=".5"/><rect x="11" y="24.3" width="1" height="1.100" fill="#319331" opacity=".5"/><rect x="8" y="26.3" width="1" height="1.100" fill="#93A1A1" opacity=".5"/><rect x="9" y="26.3" width="7" height="1.100" fill="#268BD2" opacity=".5"/><rect x="12" y="28.3" width="9" height="1.100" fill="#93A1A1" opacity=".5"/><rect x="21" y="28.3" width="1" height="1.100" fill="#859900" opacity=".5"/><rect x="22" y="28.3" width="1" height="1.100" fill="#7B3814" opacity=".5"/><rect x="23" y="28.3" width="8" height="1.100" fill="#2AA198" opacity=".5"/><rect x="32" y="28.3" width="1" height="1.100" fill="#2AA198" opacity=".5"/><rect x="34" y="28.3" width="4" height="1.100" fill="#2AA198" opacity=".5"/><rect x="39" y="28.3" width="2" height="1.100" fill="#2AA198" opacity=".5"/><rect x="41" y="28.3" width="9" height="1.100" fill="#268BD2" opacity=".5"/><rect x="51" y="28.3" width="1" height="1.100" fill="#859900" opacity=".5"/><rect x="53" y="28.3" width="9" height="1.100" fill="#268BD2" opacity=".5"/><rect x="63" y="28.3" width="1" height="1.100" fill="#859900" opacity=".5"/><rect x="65" y="28.3" width="4" height="1.100" fill="#2AA198" opacity=".5"/><rect x="69" y="28.3" width="1" height="1.100" fill="#7B3814" opacity=".5"/><rect x="12" y="30.3" width="1" height="1.100" fill="#7B3814" opacity=".5"/><rect x="13" y="30.3" width="3" height="1.100" fill="#859900" opacity=".5"/><rect x="16" y="30.3" width="4" height="1.100" fill="#268BD2" opacity=".5"/><rect x="20" y="30.3" width="1" height="1.100" fill="#7B3814" opacity=".5"/><rect x="8" y="32.3" width="1" height="1.100" fill="#93A1A1" opacity=".5"/><rect x="12" y="34.3" width="1" height="1.100" fill="#93A1A1" opacity=".5"/><rect x="13" y="34.3" width="7" height="1.100" fill="#268BD2" opacity=".5"/><rect x="21" y="34.3" width="9" height="1.100" fill="#93A1A1" opacity=".5"/><rect x="30" y="34.3" width="1" height="1.100" fill="#859900" opacity=".5"/><rect x="31" y="34.3" width="8" height="1.100" fill="#2AA198" opacity=".5"/><rect x="40" y="34.3" width="1" height="1.100" fill="#2AA198" opacity=".5"/><rect x="42" y="34.3" width="4" height="1.100" fill="#2AA198" opacity=".5"/><rect x="47" y="34.3" width="3" height="1.100" fill="#2AA198" opacity=".5"/><rect x="51" y="34.3" width="15" height="1.100" fill="#2AA198" opacity=".5"/><rect x="67" y="34.3" width="13" height="1.100" fill="#2AA198" opacity=".5"/><rect x="80" y="34.3" width="1" height="1.100" fill="#93A1A1" opacity=".5"/><rect x="16" y="36.3" width="1" height="1.100" fill="#7B3814" opacity=".5"/><rect x="17" y="36.3" width="7" height="1.100" fill="#268BD2" opacity=".5"/><rect x="24" y="36.3" width="1" height="1.100" fill="#7B3814" opacity=".5"/><rect x="25" y="36.3" width="1" height="1.100" fill="#7B3814" opacity=".5"/><rect x="26" y="36.3" width="1" height="1.100" fill="#2AA198" opacity=".5"/><rect x="28" y="36.3" width="1" height="1.100" fill="#2AA198" opacity=".5"/><rect x="29" y="36.3" width="1" height="1.100" fill="#7B3814" opacity=".5"/><rect x="16" y="38.3" width="1" height="1.100" fill="#93A1A1" opacity=".5"/><rect x="17" y="38.3" width="18" height="1.100" fill="#859900" opacity=".5"/><rect x="36" y="38.3" width="9" height="1.100" fill="#93A1A1" opacity=".5"/><rect x="45" y="38.3" width="1" height="1.100" fill="#859900" opacity=".5"/><rect x="46" y="38.3" width="30" height="1.100" fill="#2AA198" opacity=".5"/><rect x="77" y="38.3" width="9" height="1.100" fill="#2AA198" opacity=".5"/><rect x="87" y="38.3" width="2" height="1.100" fill="#93A1A1" opacity=".5"/><rect x="12" y="40.3" width="2" height="1.100" fill="#93A1A1" opacity=".5"/><rect x="14" y="40.3" width="7" height="1.100" fill="#268BD2" opacity=".5"/><rect x="21" y="40.3" width="1" height="1.100" fill="#93A1A1" opacity=".5"/><rect x="12" y="44.3" width="1" height="1.100" fill="#7B3814" opacity=".5"/><rect x="13" y="44.3" width="8" height="1.100" fill="#268BD2" opacity=".5"/><rect x="21" y="44.3" width="1" height="1.100" fill="#7B3814" opacity=".5"/><rect x="8" y="46.3" width="2" height="1.100" fill="#93A1A1" opacity=".5"/><rect x="10" y="46.3" width="7" height="1.100" fill="#268BD2" opacity=".5"/><rect x="17" y="46.3" width="1" height="1.100" fill="#93A1A1" opacity=".5"/><rect x="4" y="48.3" width="1" height="1.100" fill="#319331" opacity=".5"/><rect x="0" y="50.3" width="1" height="1.100" fill="#0431FA" opacity=".5"/></svg>
<div class="a" style="left:1491px;top:0;width:1px;height:837px;background:#E0DCCB"></div>
<div class="a" style="left:1492px;top:0;width:20px;height:3px;background:#8A9A9E"></div>
</div>
<div id="status" class="a"></div>
<div class="a" style="left:0;top:975px;width:51px;height:33px;background:#AC9D57"></div>
<svg style="left:0;top:974px" width="200" height="36" viewBox="0 0 200 36" fill="none" stroke="#fff" stroke-width="1.500"><path d="M18.800 14.200 25 20l-5.700 5.700M31.800 9 25.600 14.700l6.200 5.300"/></svg>
<svg style="left:0;top:974px" width="200" height="36" viewBox="0 0 200 36" fill="none" stroke="#586E75" stroke-width="1.400"><circle cx="69" cy="10.400" r="2.700"/><circle cx="69" cy="24.800" r="2.700"/><circle cx="78.300" cy="14" r="2.700"/><path d="M69 13.100v9M77.300 16.500c-1 2.500-3 3-5 3.300s-3.300.8-3.300 2.300"/></svg>
<span class="t" style="left:89.8px;top:983.5px;font-size:17.5px;color:#586E75;font-weight:normal;letter-spacing:0.157px">develop</span>
<svg style="left:0;top:974px" width="200" height="36" viewBox="0 0 200 36" fill="none" stroke="#586E75" stroke-width="1.400"><path d="M164.800 18.500a7.300 7.300 0 0 1 14-3.500M179.200 18a7.300 7.300 0 0 1-14 3.500"/><path d="M176 16.500l3.200.5 2.300-3M167.800 20l-3.200-.5-2.300 3"/></svg>
<svg style="left:207px;top:981.300px" width="20" height="20" viewBox="0 0 20 20" fill="none" stroke="#586E75" stroke-width="1.400"><circle cx="10" cy="10" r="8.800"/><path d="M6.300 6.300l7.400 7.400M13.700 6.300l-7.400 7.400"/></svg>
<span class="t" style="left:232.6px;top:983.5px;font-size:17.5px;color:#586E75;font-weight:normal;letter-spacing:-0.933px">0</span>
<svg style="left:248px;top:982px" width="19" height="18" viewBox="0 0 19 18" fill="none" stroke="#586E75" stroke-width="1.400" stroke-linejoin="round"><path d="M9.500 1.200 18 16.800h-17z"/><path d="M9.500 6.500v5.500M9.500 13.500v1.600"/></svg>
<span class="t" style="left:273.5px;top:983.5px;font-size:17.5px;color:#586E75;font-weight:normal;letter-spacing:-0.933px">0</span>
<svg style="left:300px;top:974px" width="40" height="36" viewBox="300 974 40 36" fill="none" stroke="#586E75" stroke-width="1.400"><path d="M308.500 993A8.600 8.600 0 0 1 324.600 987.500"/></svg>
<span class="t" style="left:333.0px;top:983.5px;font-size:17.5px;color:#586E75;font-weight:normal;letter-spacing:0.269px">Initializing 'tsconfig.json'</span>
<span class="t" style="left:1316.0px;top:983.5px;font-size:17.5px;color:#586E75;font-weight:normal;letter-spacing:-0.258px">Ln 1, Col 1</span>
<span class="t" style="left:1423.7px;top:983.5px;font-size:17.5px;color:#586E75;font-weight:normal;letter-spacing:-0.480px">Tab Size: 4</span>
<span class="t" style="left:1529.0px;top:983.5px;font-size:17.5px;color:#586E75;font-weight:normal;letter-spacing:-0.516px">UTF-8</span>
<span class="t" style="left:1600.0px;top:983.5px;font-size:17.5px;color:#586E75;font-weight:normal;letter-spacing:-1.675px">CRLF</span>
<svg style="left:1660px;top:974px" width="40" height="36" viewBox="1660 974 40 36" fill="none" stroke="#586E75" stroke-width="1.400"><path d="M1666.200 987.500A8.800 8.800 0 0 1 1683.300 991.600"/></svg>
<span class="t" style="left:1694.6px;top:983.5px;font-size:17.5px;color:#586E75;font-weight:normal;letter-spacing:-0.473px">TypeScript JSX</span>
<svg style="left:1825px;top:974px" width="80" height="36" viewBox="1825 974 80 36" fill="none" stroke="#586E75" stroke-width="2" stroke-linejoin="round"><rect x="1834.300" y="983.300" width="7" height="7.600" rx="3"/><rect x="1842.900" y="983.300" width="7" height="7.600" rx="3"/><path d="M1834.500 989c-1.700.8-2.300 1.800-2.300 3.600v2.300c0 1 .6 1.700 1.600 2.300 2.200 1.400 5 2.200 8.300 2.200s6.100-.8 8.300-2.200c1-.6 1.600-1.300 1.600-2.300v-2.300c0-1.800-.6-2.800-2.300-3.600"/><path d="M1839.600 993.200v2.600M1844.700 993.200v2.600" stroke-width="1.700"/><path d="M1833.300 991.500v4.500l3 2 5.800 1 5.800-1 3-2v-4.500z" fill="#586E75" opacity=".0" stroke="none"/></svg>
<svg style="left:1870px;top:974px" width="40" height="36" viewBox="1870 974 40 36" fill="none" stroke="#586E75" stroke-width="1.500" stroke-linejoin="round"><path d="M1888 983.200c-3.800.3-5.600 3.200-5.600 6.300v4.500l-2.200 3.500h14.400l-2.200-3.500v-2"/><path d="M1885.400 998.300a2 2 0 0 0 4 0"/><circle cx="1892.400" cy="986.900" r="3.900" fill="#586E75" stroke="none"/></svg>
<div class="a" style="left:0;top:1008px;width:1920px;height:72px;background:linear-gradient(90deg,#1D2133 0,#1D2133 285px,#152353 360px,#152355 700px,#142158 900px,#16224E 1000px,#1A2144 1085px,#1A2144 1135px,#142354 1195px,#142352 1305px,#1C2033 1372px,#1C2033 1920px)"></div>
<div class="a" style="left:0;top:1008px;width:1920px;height:1.500px;background:linear-gradient(90deg,#44475A 0,#44475A 285px,#3C4870 360px,#3C4870 1305px,#44475A 1372px)"></div>
<svg style="left:32px;top:1033px" width="11" height="14" viewBox="0 0 11 14"><path d="M5.500 0c.5 2 3 3 4.500 5.500 1.500 3 .5 8.500-4.500 8.500S-.5 9.500 1 6.500c.5-1 1-1.500 1.500-2 .2 1 .6 1.500 1.200 1.800C3.500 4 4 1.500 5.500 0z" fill="#E8452C"/><path d="M5.500 6.500c1.500 1.500 3 2.500 2.800 4.500-.2 1.800-1.500 2.800-2.800 2.800s-2.800-1-2.800-2.800c0-1.500 1.500-2.500 2.800-4.500z" fill="#FFC83D"/></svg>
<svg style="left:42px;top:1022px" width="30" height="40" viewBox="0 0 30 40"><path d="M4.500 8a4.800 4.800 0 0 1 9.600 0v15.500a7.800 7.800 0 1 1-9.600 0z" fill="#A9E0E6"/><path d="M7.300 10h4v16h-4z" fill="#E8305A"/><circle cx="9.300" cy="30" r="4.800" fill="#E02B45"/><circle cx="10.300" cy="29.500" r="1.300" fill="#F59AB0"/><circle cx="15.500" cy="7.200" r="12" fill="#FF8C9F"/></svg>
<span class="t" style="left:52.500px;top:1021px;font-size:16.500px;color:#1b1b1b">6</span>
<span class="t" style="left:76.3px;top:1024.3px;font-size:16.8px;color:#fff;font-weight:normal;letter-spacing:0.775px">Hot weather</span>
<span class="t" style="left:76.3px;top:1049.1px;font-size:16.8px;color:#C9CCC8;font-weight:normal;letter-spacing:0.976px">Now</span>
<svg style="left:488.100px;top:1027.100px" width="34.600" height="34.900" viewBox="0 0 34.600 34.900"><defs><linearGradient id="wg" x1="0" y1="0" x2="1" y2="1"><stop offset="0" stop-color="#72E4FF"/><stop offset=".5" stop-color="#3FBDF8"/><stop offset="1" stop-color="#1C9CF2"/></linearGradient></defs><path d="M1 0h15.650v16.800H0V1a1 1 0 0 1 1-1zM17.950 0H33.600a1 1 0 0 1 1 1v15.800H17.950zM0 18.100h16.650v16.800H1a1 1 0 0 1-1-1zM17.950 18.100H34.600v15.800a1 1 0 0 1-1 1H17.950z" fill="url(#wg)"/></svg>
<div class="a" style="left:543px;top:1020px;width:330px;height:48px;border-radius:24px;background:linear-gradient(90deg,#3A4171,#2F396C 60%,#2C366A);border:1.500px solid;border-color:#6870A0 #4A5486 #3C467A #4A5486"></div>
<svg style="left:560px;top:1032px" width="25" height="25" viewBox="0 0 25 25" fill="none" stroke="#EEF0EA" stroke-width="2.400" stroke-linecap="round"><circle cx="10.500" cy="10.500" r="8.300" fill="#6A6C92"/><path d="M16.800 16.800 22 22"/></svg>
<span class="t" style="left:599.0px;top:1035.2px;font-size:19.5px;color:#E4E8E2;font-weight:normal;letter-spacing:-0.131px">Search</span>
<svg style="left:790px;top:1025px" width="85" height="40" viewBox="790 1025 85 40"><path d="M797 1053.500h69.500l-3.500 6.500h-64.500a1.500 1.500 0 0 1-1.500-1.500z" fill="#E3A873"/><path d="M797 1053.500h69.500l-1 1.800H797z" fill="#F4CFA0"/><path d="M802 1045.200h11.200v4.600a5 5 0 0 1-5 5h-1.200a5 5 0 0 1-5-5z" fill="#EDB184"/><path d="M807.400 1045.500v-11" stroke="#8A5A3C" stroke-width="1" fill="none"/><path d="M807.400 1037c-3.500-.3-5-2.300-5.500-4.300 3 .2 5 1.800 5.500 4.300zM807.400 1041c-3.800 0-5.600-1.800-6.300-3.800 3.200-.2 5.500 1.300 6.300 3.800zM807.400 1045c-3.800.2-6-1.300-7-3.300 3.300-.5 5.800.8 7 3.300zM807.400 1035.500c.3-3 2-4.500 4-5 0 2.800-1.500 4.500-4 5zM807.400 1040c.8-3 2.800-4.200 5.500-4.200-.5 2.800-2.500 4.200-5.500 4.200zM807.400 1044.500c1-3.200 4-4.800 7.400-4.500-1 3.200-4 4.800-7.400 4.500z" fill="#3FA64C"/><rect x="816.200" y="1032" width="18.800" height="22.800" rx="1" fill="#C98242"/><rect x="818.600" y="1034.800" width="14" height="17.400" fill="#9CCBEA"/><rect x="818.600" y="1034.800" width="14" height="7.500" fill="#E8B08A"/><path d="M818.600 1048l4-4 3.500 2.500 3.500-3 3 2v6.700h-14z" fill="#5F86B0"/><circle cx="823.200" cy="1039.700" r="1.700" fill="#FFF1DC"/><path d="M838 1046.300a1.500 1.500 0 0 1 1.500-1.500h3.600a1.500 1.500 0 0 1 1.500 1.500v8.500h-6.600z" fill="#F7ECD6"/><path d="M841.300 1039.700c1.600 2 2 3.600 0 5.600-2-2-1.600-3.600 0-5.600z" fill="#F5A623"/><rect x="848.300" y="1037.200" width="4.900" height="17.600" rx=".8" fill="#8E9A4E"/><rect x="853.200" y="1030.200" width="3.600" height="24.600" rx=".6" fill="#2C95A8"/><rect x="856.800" y="1034.800" width="4.600" height="20" rx=".8" fill="#B66A30"/></svg>
<svg style="left:891px;top:1027px" width="37" height="34" viewBox="0 0 37 34"><rect x="0" y="10" width="27" height="24" rx="2" fill="#58595E"/><rect x="9" y="0" width="27" height="25" rx="2" fill="#F1F2F2"/><path d="M9 10h18v15H11a2 2 0 0 1-2-2z" fill="#BDBFC2"/></svg>
<svg style="left:945px;top:1015px" width="60" height="60" viewBox="0 0 60 60"><defs><linearGradient id="cpl" x1="0" y1="0" x2="0" y2="1"><stop offset="0" stop-color="#1AA4F4"/><stop offset=".3" stop-color="#1F96DC"/><stop offset=".45" stop-color="#2EB2A8"/><stop offset=".6" stop-color="#5CC258"/><stop offset=".78" stop-color="#D4BC20"/><stop offset="1" stop-color="#FFC012"/></linearGradient><linearGradient id="cpr" x1="0" y1="0" x2="0" y2="1"><stop offset="0" stop-color="#B66CF2"/><stop offset=".2" stop-color="#C070E0"/><stop offset=".45" stop-color="#F0508C"/><stop offset=".65" stop-color="#F06878"/><stop offset=".82" stop-color="#EFA050"/><stop offset="1" stop-color="#F8C848"/></linearGradient></defs><path d="M22 43.900c-1.500-.5-2.500-2.500-2.900-4.500l-.500-3.300h9.500l2.500-.500-3 8.300z" fill="#E8503A"/><path d="M19.500 13.800h15c2 0 3 1.200 3.600 3l1.300 4.300h-7.600l-6.300 14c-.5 1-1.500 1.200-2.500 1.200h-5.500c-3 0-5-2.500-4.200-5.500l3-13c.7-2.500 1.800-4 3.200-4z" fill="url(#cpl)"/><path d="M35 13.800c2 0 3 1.200 3.600 3l1.300 4.300h-7.600l-1.500 3.200z" fill="#1A78E0"/><path d="M33.300 22.200h9.700c3 0 4.500 2.400 3.700 5.400l-3.300 13c-.7 2.500-2.300 3.400-4.400 3.400H24.500l5.500-9z" fill="url(#cpr)"/></svg>
<svg style="left:1023px;top:1028px" width="37" height="33" viewBox="0 0 37 33"><path d="M2 0h10.500l3 3.500H35a2 2 0 0 1 2 2V9H0V2a2 2 0 0 1 2-2z" fill="#E8A82E"/><rect x="0" y="5.500" width="37" height="27" rx="2" fill="#FFCF48"/><path d="M0 20h37v10.500a2 2 0 0 1-2 2H2a2 2 0 0 1-2-2z" fill="#F5BE34"/><path d="M6.500 32.500V25a3 3 0 0 1 3-3h18a3 3 0 0 1 3 3v7.500z" fill="#2D8FE0"/><rect x="10.500" y="25.500" width="16" height="2.500" rx="1.200" fill="#1A62B4"/></svg>
<svg style="left:1088.800px;top:1025.900px" width="36.400" height="36.400" viewBox="0 0 37 37"><defs><linearGradient id="eg1" x1="0" y1="0" x2="1" y2="0"><stop offset="0" stop-color="#33BDF2"/><stop offset=".55" stop-color="#2FB0D8"/><stop offset=".8" stop-color="#4CCB78"/><stop offset="1" stop-color="#56D06A"/></linearGradient><linearGradient id="eg2" x1="0" y1="0" x2="0" y2="1"><stop offset="0" stop-color="#1C9AE6"/><stop offset="1" stop-color="#0F7FD8"/></linearGradient></defs><circle cx="18.300" cy="18.300" r="18" fill="url(#eg2)"/><path d="M.4 16.500C1.500 7 9 .3 18.300.3c10 0 18 7.500 18 16 0 5.500-4.300 8.700-9 8.700-3.700 0-5.800-1.700-5.800-3.200 0-1.400 1.300-2 1.300-4.300 0-3.200-3.300-7-8.800-7-6 0-10.800 2.800-13.600 6z" fill="url(#eg1)"/><path d="M14.500 10.500c-5.500 1-10.500 6.500-9 14.500 1.300 6.500 7 11 13.500 11.300 6 .2 11-2.500 14.200-8-3 2-7 3-10.500 2-6-1.500-9.500-6.500-9-11.500.3-3 1.500-5.500 3.800-7.300-1-.6-2-.9-3-1z" fill="#1464BC"/><path d="M14.700 18.200c0-2.300 1.800-4 4-4 2.400 0 4 1.700 4 3.700 0 2.300-1.300 2.900-1.300 4.300 0 1.800 2.300 3.900 6.300 3.900 2.500 0 4.500-.7 6-1.700-1.800 3.200-5 5-8.700 5-5.800 0-10.300-5-10.300-11.200z" fill="#1A2144"/></svg>
<svg style="left:1155px;top:1026px" width="37" height="37" viewBox="0 0 48 48"><path d="M24 12h20.780A24 24 0 0 0 3.210 12l10.390 18A12 12 0 0 1 24 12z" fill="#E33B2E"/><path d="M34.390 30 24 48A24 24 0 0 0 44.780 12H24a12 12 0 0 1 10.390 18z" fill="#FCC934"/><path d="M13.600 30 3.210 12A24 24 0 0 0 24 48l10.390-18a12 12 0 0 1-20.790 0z" fill="#2DA94F"/><circle cx="24" cy="24" r="11.500" fill="#fff"/><circle cx="24" cy="24" r="9" fill="#2A7DE1"/></svg>
<svg style="left:1175px;top:1019px" width="24" height="24" viewBox="0 0 24 24"><defs><clipPath id="avc"><circle cx="12" cy="12" r="12"/></clipPath></defs><g clip-path="url(#avc)"><rect width="24" height="24" fill="#4A4843"/><circle cx="5" cy="6" r="4" fill="#8A8882"/><circle cx="20" cy="5" r="3.500" fill="#7A776F"/><rect y="13" width="24" height="11" fill="#CFC8B8"/><circle cx="12.500" cy="8.500" r="4.500" fill="#A9795C"/><path d="M8 5.500c1-3 8-3 9 0l-.5 2.500h-8z" fill="#3A2E28"/><path d="M4 24c0-7 4-10 8.500-10s8.500 3 8.500 10z" fill="#E2DCCB"/></g></svg>
<div class="a" style="left:1168.500px;top:1068.500px;width:9.500px;height:4.500px;border-radius:2.500px;background:#9A9EAD"></div>
<div class="a" style="left:1209px;top:1014px;width:60px;height:60px;border-radius:7px;background:#233062;border:1px solid #2E3B70"></div>
<svg style="left:1220px;top:1025.500px" width="37.500" height="37" viewBox="0 0 100 100"><path d="M70.900 99.300a6.200 6.200 0 0 0 5-.2l20.600-9.900A6.200 6.200 0 0 0 100 83.600V16.400a6.200 6.200 0 0 0-3.500-5.600L75.900.9a6.200 6.200 0 0 0-7.100 1.200L29.400 38 12.200 25a4.200 4.200 0 0 0-5.300.2L1.400 30.300a4.200 4.200 0 0 0 0 6.200L16.300 50 1.400 63.600a4.200 4.200 0 0 0 0 6.200l5.500 5a4.200 4.200 0 0 0 5.300.2l17.200-13 39.400 36a6.200 6.200 0 0 0 2.100 1.300zM75 27.300 45.100 50 75 72.700z" fill="#1A84D8" fill-rule="evenodd"/><path d="M75 1.500V98.500c.3 0 .6-.2.900-.3l20.600-9.900A6.200 6.200 0 0 0 100 82.700V17.300a6.200 6.200 0 0 0-3.500-5.600L75.900 1.800c-.3-.1-.6-.2-.9-.3z" fill="#29ABF5"/></svg>
<div class="a" style="left:1227px;top:1068px;width:24px;height:5px;border-radius:2.500px;background:#4CC2FF"></div>
<svg style="left:1375px;top:1038px" width="17" height="11" viewBox="0 0 17 11" fill="none" stroke="#fff" stroke-width="2"><path d="M1 10l7.500-7.800L16 10"/></svg>
<svg style="left:1418px;top:1035px" width="25" height="17" viewBox="0 0 25 17"><path d="M6 16.500a5 5 0 0 1-1-9.800 7 7 0 0 1 13-1.700 6 6 0 0 1 1.500 11.500z" fill="#B9BDC1"/><path d="M5 16.500a4.500 4.500 0 0 1-.5-8.500L20 16.500z" fill="#F2F3F4"/><path d="M4.500 8c2-1.500 5-1.500 7 0L24 14c-.5 1.500-2 2.500-4 2.500H6z" fill="#E4E6E8"/></svg>
<svg style="left:1460px;top:1025px" width="40" height="40" viewBox="1460 1025 40 40" fill="none" stroke="#F2F2F2" stroke-width="1.500"><path d="M1467.700 1043.400A11 11 0 0 1 1488.800 1038.700M1482.200 1038.700h6.900v-6.500"/><path d="M1480 1054.800A11 11 0 0 1 1468.900 1049.200M1476.100 1049.200h-7.200v6.400"/><circle cx="1485" cy="1049.700" r="6.100" fill="#1182DC" stroke="none"/></svg>
<svg style="left:1516px;top:1032px" width="24" height="25" viewBox="0 0 24 25"><path d="M11 0c3 2 6.500 3 10.500 3v8c0 6-4 10.500-10.500 13C4.500 21.500.5 17 .5 11V3C4.500 3 8 2 11 0z" fill="#2C9BE8"/><path d="M11 0v24C4.500 21.500.5 17 .5 11V3C4.500 3 8 2 11 0z" fill="#1A78CE"/><path d="M.5 3C4.500 3 8 2 11 0v11H.5z" fill="#35B0F0"/><circle cx="16.500" cy="17.500" r="6.500" fill="#13931F"/><path d="M13.300 17.500l2.300 2.300 4.200-4.400" fill="none" stroke="#fff" stroke-width="1.700"/></svg>
<svg style="left:1563px;top:1032px" width="24" height="24" viewBox="0 0 24 24"><rect width="24" height="24" rx="2.500" fill="#1D7FEA"/><path d="M0 17l7 7H2.500A2.500 2.500 0 0 1 0 21.500z" fill="#1660BD"/><path d="M8 8.500l5-3.500 4.500 3v5l-3 2v-5l-2-1.300L9.500 10z" fill="#fff"/><path d="M8.500 11.500l3-2v8l-3 2z" fill="#BFE2F7"/></svg>
<span class="t" style="left:1615.0px;top:1024.5px;font-size:17px;color:#fff;font-weight:normal;letter-spacing:-0.946px">ENG</span>
<span class="t" style="left:1623.5px;top:1047.5px;font-size:17px;color:#fff;font-weight:normal;letter-spacing:0.000px">IN</span>
<svg style="left:1677px;top:1034px" width="25" height="19" viewBox="0 0 25 19" fill="none" stroke="#fff" stroke-width="1.900" stroke-linecap="round"><path d="M1.500 6.500a15.500 15.500 0 0 1 22 0M5 10.300a10.500 10.500 0 0 1 15 0M8.500 13.800a5.600 5.600 0 0 1 8 0"/><circle cx="12.500" cy="16.800" r="1.700" fill="#fff" stroke="none"/></svg>
<svg style="left:1713px;top:1034px" width="25" height="20" viewBox="0 0 25 20" fill="none" stroke="#fff" stroke-width="1.600" stroke-linejoin="round"><path d="M1 6.500h3.500L9.500 1.500v17L4.500 13.500H1z"/><path d="M12.500 6.500a5 5 0 0 1 0 7"/><path d="M15.500 3.500a9 9 0 0 1 0 13" stroke="#8A8E9A"/><path d="M18.500 1a13 13 0 0 1 0 18" stroke="#5A5E6C"/></svg>
<svg style="left:1749px;top:1036px" width="25" height="16" viewBox="0 0 25 16"><rect x="1" y="1" width="20" height="14" rx="3.500" fill="none" stroke="#fff" stroke-width="1.700"/><rect x="3.800" y="3.800" width="14.400" height="8.400" rx="1.500" fill="#fff"/><path d="M22.500 5.500c1.500 0 2 1 2 2.500s-.5 2.500-2 2.500z" fill="#fff"/></svg>
<span class="t" style="left:1848.5px;top:1023.3px;font-size:17px;color:#fff;font-weight:normal;letter-spacing:0.144px">12:11</span>
<span class="t" style="left:1798.0px;top:1046.8px;font-size:17px;color:#fff;font-weight:normal;letter-spacing:0.554px">17-10-2025</span>
</body></html>
